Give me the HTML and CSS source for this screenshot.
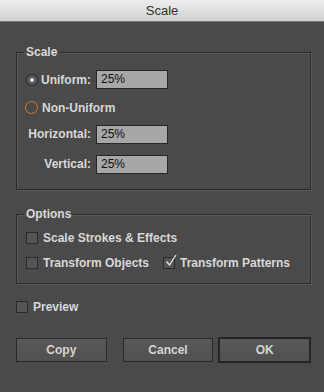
FILE: index.html
```html
<!DOCTYPE html>
<html>
<head>
<meta charset="utf-8">
<link rel="stylesheet" href="styles.css">
</head>
<body>
<div class="titlebar">Scale</div>
<div class="content">
  <fieldset class="group scale">
    <legend>Scale</legend>
    <div class="scale-grid">
      <div class="cell-uniform"><span class="radio selected"></span><span>Uniform:</span></div>
      <div class="field">25%</div>
      <div class="cell-non"><span class="radio focus"></span><span>Non-Uniform</span></div>
      <div class="label r3">Horizontal:</div>
      <div class="field r3">25%</div>
      <div class="label r4">Vertical:</div>
      <div class="field r4">25%</div>
    </div>
  </fieldset>
  <fieldset class="group options">
    <legend>Options</legend>
    <div class="opt-rows">
      <div class="opt-row"><span class="check"><span class="box"></span>Scale Strokes &amp; Effects</span></div>
      <div class="opt-row">
        <span class="check first"><span class="box"></span>Transform Objects</span>
        <span class="check"><span class="box checked"><svg viewBox="0 0 14 14" width="14" height="14"><path d="M2.5 7.5 L5.5 11 L12 1" fill="none" stroke="#e6e6e6" stroke-width="1.3"/></svg></span>Transform Patterns</span>
      </div>
    </div>
  </fieldset>
  <div class="preview"><span class="check"><span class="box"></span>Preview</span></div>
  <div class="buttons">
    <div class="btn">Copy</div>
    <div class="btn cancel">Cancel</div>
    <div class="btn ok">OK</div>
  </div>
</div>
</body>
</html>
```
FILE: styles.css
```css
* { box-sizing: border-box; }
html, body { margin: 0; padding: 0; }
body {
  width: 324px;
  height: 392px;
  background: #4a4a4a;
  font-family: "Liberation Sans", Arial, sans-serif;
  font-size: 12px;
  font-weight: bold;
  color: #d8d8d8;
  overflow: hidden;
}
.titlebar {
  height: 22px;
  line-height: 21px;
  text-align: center;
  font-size: 13px;
  font-weight: normal;
  color: #333;
  background: linear-gradient(#ededed, #d2d2d2);
  border-bottom: 1px solid #7a7a7a;
}
.content {
  padding: 22px 13px 0 16px;
}
.group {
  margin: 0;
  padding: 0;
  border: 1px solid #2c2c2c;
  box-shadow: 1px 1px 0 #585858, inset 1px 1px 0 #585858;
  min-width: 0;
}
.group + .group { margin-top: 16px; }
.group legend {
  margin-left: 7px;
  padding: 0 2px;
  line-height: 16px;
  height: 16px;
}
.scale-grid {
  display: grid;
  grid-template-columns: 65px 72px;
  column-gap: 5px;
  padding: 10px 0 15px 9px;
}
.cell-uniform {
  display: flex;
  align-items: center;
  justify-content: space-between;
  height: 19px;
}
.cell-non {
  grid-column: 1 / 3;
  display: flex;
  align-items: center;
  gap: 4px;
  height: 19px;
  margin-top: 9px;
}
.label {
  text-align: right;
  line-height: 19px;
  height: 19px;
}
.r3 { margin-top: 8px; }
.r4 { margin-top: 11px; }
.field {
  height: 19px;
  background: #a7a7a7;
  border: 1px solid #272727;
  font-weight: normal;
  color: #111;
  line-height: 17px;
  padding-left: 4px;
  font-size: 12px;
}
.radio {
  display: inline-block;
  width: 12px;
  height: 12px;
  border-radius: 50%;
  flex: none;
}
.radio.selected {
  background: radial-gradient(circle, #e6e6e6 0 1.6px, #5a5a5a 2.2px);
  border: 1px solid #2a2a2a;
}
.radio.focus {
  border: 1.5px solid #d47b22;
  background: #4a4a4a;
  width: 13px;
  height: 13px;
  margin-left: -1px;
}
.opt-rows {
  padding: 8px 0 12px 9px;
}
.opt-row {
  display: flex;
  align-items: center;
  height: 16px;
}
.opt-row + .opt-row { margin-top: 9px; }
.check {
  display: inline-flex;
  align-items: center;
  gap: 5px;
}
.check.first { width: 137px; }
.box {
  position: relative;
  display: inline-block;
  width: 12px;
  height: 12px;
  border: 1px solid #2a2a2a;
  background: #555;
  flex: none;
}
.box svg {
  position: absolute;
  left: 0;
  top: -4px;
}
.preview {
  margin-top: 15px;
  height: 16px;
  display: flex;
  align-items: center;
}
.buttons {
  margin-top: 22px;
  display: flex;
  align-items: center;
  height: 26px;
}
.btn {
  width: 91px;
  height: 24px;
  border: 1px solid #2a2a2a;
  background: linear-gradient(#585858, #515151);
  text-align: center;
  line-height: 22px;
  font-size: 12px;
  color: #d4d4d4;
}
.btn.cancel { margin-left: 16px; }
.btn.ok {
  margin-left: 5px;
  width: 93px;
  height: 26px;
  border: 2px solid #252525;
}
```
